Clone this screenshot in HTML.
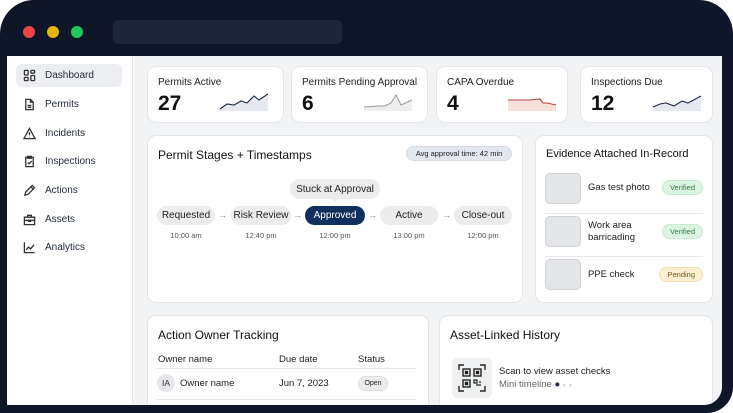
<!DOCTYPE html>
<html><head><style>
*{box-sizing:border-box;margin:0;padding:0}
body{width:733px;height:413px;background:#fff;font-family:"Liberation Sans",sans-serif;overflow:hidden;position:relative;color:#111}
.frame{position:absolute;left:0;top:0;width:733px;height:413px;background:#0f1628;border-radius:34px 34px 26px 0}
.dot{position:absolute;top:26px;width:12px;height:12px;border-radius:50%}
.url{position:absolute;left:113px;top:20px;width:229px;height:24px;background:#1d2537;border-radius:5px}
.screen{position:absolute;left:7px;top:56px;width:715px;height:349px;background:#f2f3f5;border-radius:0 0 18px 0;overflow:hidden}
.side{position:absolute;left:0;top:0;width:126px;height:349px;background:#fff;border-right:1px solid #e5e7eb}
.nav{position:absolute;left:9px;width:106px;height:23px;border-radius:6px;font-size:10px;display:flex;align-items:center;padding-left:7px;color:#1f2937}
.nav svg{width:13px;height:13px;margin-right:9px;fill:none;stroke:#333;stroke-width:1.4}
.card{position:absolute;background:#fff;border:1px solid #e3e5e8;border-radius:9px}
.kt{position:absolute;left:10px;top:10px;font-size:10px;color:#222}
.kv{position:absolute;left:10px;top:25px;font-size:21px;font-weight:bold;color:#111}
.spark{position:absolute;right:14px;top:24px;width:50px;height:20px}
h3{position:absolute;font-size:12px;font-weight:normal;color:#111;left:10px;top:12px}
.pill{position:absolute;height:19px;border-radius:10px;background:#ececec;font-size:10px;display:flex;align-items:center;justify-content:center;color:#222}
.tm{position:absolute;font-size:7.5px;color:#555;width:60px;text-align:center}
.ar{position:absolute;font-size:9px;color:#888}
.thumb{position:absolute;left:9px;width:36px;height:31px;background:#e4e5e7;border:1px solid #cfd1d4;border-radius:5px}
.el{position:absolute;left:52px;font-size:9.5px;color:#222;line-height:12px}
.badge{position:absolute;right:9px;height:15px;border-radius:8px;font-size:7.5px;display:flex;align-items:center;padding:0 7px}
.ok{background:#dcf5e2;color:#3a7a4b;border:1px solid #c5ebd0}
.pe{background:#fcefd2;color:#7a5a20;border:1px solid #f3dfb0}
.hr{position:absolute;left:9px;right:9px;height:1px;background:#e5e7eb}
.th{position:absolute;font-size:9.5px;color:#222}
</style></head><body>
<div class="frame"></div>
<div class="dot" style="left:23px;background:#ef4444"></div>
<div class="dot" style="left:47px;background:#eab308"></div>
<div class="dot" style="left:71px;background:#22c55e"></div>
<div class="url"></div>
<div class="screen">
<div class="side">
<div class="nav" style="top:8px;background:#eceef1"><svg viewBox="0 0 14 14"><rect x="1.5" y="1.5" width="4" height="5" rx=".8"/><rect x="8.5" y="1.5" width="4" height="3" rx=".8"/><rect x="1.5" y="9" width="4" height="3.5" rx=".8"/><rect x="8.5" y="7" width="4" height="5.5" rx=".8"/></svg>Dashboard</div>
<div class="nav" style="top:37px"><svg viewBox="0 0 14 14"><path d="M3 1.5h5l3 3v8H3z M8 1.5v3h3 M5 8h4 M5 10h4"/></svg>Permits</div>
<div class="nav" style="top:66px"><svg viewBox="0 0 14 14"><path d="M7 1.5L13 12.5H1z M7 5.5v3.5 M7 10.5v.5"/></svg>Incidents</div>
<div class="nav" style="top:94px"><svg viewBox="0 0 14 14"><path d="M3 2.5h8v10H3z M5 1.5h4v2H5z M5 8l1.5 1.5L9.5 6.5"/></svg>Inspections</div>
<div class="nav" style="top:123px"><svg viewBox="0 0 14 14"><path d="M2 12l1-3.5 7-7 2.5 2.5-7 7z M8.5 3l2.5 2.5"/></svg>Actions</div>
<div class="nav" style="top:152px"><svg viewBox="0 0 14 14"><path d="M1.5 4.5h11v8h-11z M5 4.5v-2h4v2 M1.5 8h11 M6 7v2h2V7"/></svg>Assets</div>
<div class="nav" style="top:180px"><svg viewBox="0 0 14 14"><path d="M1.5 1.5v11h11 M3.5 9.5l2.5-3 2 2 4-4.5"/></svg>Analytics</div>
</div>

<div class="card" style="left:140px;top:10px;width:137px;height:57px"><div class="kt">Permits Active</div><div class="kv">27</div>
<svg class="spark" viewBox="0 0 50 20"><path d="M1 18 L8 13 L15 14 L22 10 L28 12 L35 5 L40 9 L49 3 V20 H1z" fill="#e6eaf0"/><path d="M1 18 L8 13 L15 14 L22 10 L28 12 L35 5 L40 9 L49 3" fill="none" stroke="#1e2a44" stroke-width="1.1"/></svg></div>
<div class="card" style="left:284px;top:10px;width:137px;height:57px"><div class="kt">Permits Pending Approval</div><div class="kv">6</div>
<svg class="spark" viewBox="0 0 50 20"><path d="M1 16 L15 15 L22 15 L28 12 L33 4 L38 14 L49 9 V20 H1z" fill="#eeeeee"/><path d="M1 16 L15 15 L22 15 L28 12 L33 4 L38 14 L49 9" fill="none" stroke="#999" stroke-width="1"/></svg></div>
<div class="card" style="left:429px;top:10px;width:132px;height:57px"><div class="kt">CAPA Overdue</div><div class="kv">4</div>
<svg class="spark" viewBox="0 0 50 20" style="width:50px;right:10px"><path d="M1 9 L22 9 L33 8 L36 12 L40 12 L49 14 V20 H1z" fill="#f8e0dc"/><path d="M1 9 L22 9 L33 8 L36 12 L40 12 L49 14" fill="none" stroke="#b5463a" stroke-width="1.1"/></svg></div>
<div class="card" style="left:573px;top:10px;width:133px;height:57px"><div class="kt">Inspections Due</div><div class="kv">12</div>
<svg class="spark" viewBox="0 0 50 20" style="right:10px"><path d="M1 16 L8 13 L14 12 L22 15 L30 10 L36 12 L49 5 V20 H1z" fill="#e6eaf0"/><path d="M1 16 L8 13 L14 12 L22 15 L30 10 L36 12 L49 5" fill="none" stroke="#1e2a44" stroke-width="1.1"/></svg></div>

<div class="card" style="left:140px;top:79px;width:376px;height:168px">
<h3>Permit Stages + Timestamps</h3>
<div class="pill" style="left:258px;top:10px;width:106px;height:15px;font-size:7.5px;background:#e3e7ee;border:1px solid #d5dae3">Avg approval time: 42 min</div>
<div class="pill" style="left:142px;top:43px;width:90px;height:20px">Stuck at Approval</div>
<div style="position:absolute;left:183px;top:62px;border:4px solid transparent;border-top-color:#ececec"></div>
<div class="pill" style="left:9px;top:70px;width:58px">Requested</div>
<div class="pill" style="left:83px;top:70px;width:60px">Risk Review</div>
<div class="pill" style="left:157px;top:70px;width:60px;background:#0f2f5c;color:#fff">Approved</div>
<div class="pill" style="left:232px;top:70px;width:58px">Active</div>
<div class="pill" style="left:306px;top:70px;width:58px">Close-out</div>
<div class="ar" style="left:70px;top:74px">→</div><div class="ar" style="left:145px;top:74px">→</div><div class="ar" style="left:220px;top:74px">→</div><div class="ar" style="left:294px;top:74px">→</div>
<div class="tm" style="left:8px;top:95px">10:00 am</div><div class="tm" style="left:83px;top:95px">12:40 pm</div><div class="tm" style="left:157px;top:95px">12:00 pm</div><div class="tm" style="left:231px;top:95px">13:00 pm</div><div class="tm" style="left:305px;top:95px">12:00 pm</div>
</div>

<div class="card" style="left:528px;top:79px;width:178px;height:168px">
<h3 style="font-size:11px">Evidence Attached In-Record</h3>
<div class="thumb" style="top:37px"></div><div class="el" style="top:46px">Gas test photo</div><div class="badge ok" style="top:44px">Verified</div>
<div class="hr" style="top:77px"></div>
<div class="thumb" style="top:80px"></div><div class="el" style="top:84px">Work area<br>barricading</div><div class="badge ok" style="top:88px">Verified</div>
<div class="hr" style="top:120px"></div>
<div class="thumb" style="top:123px"></div><div class="el" style="top:133px">PPE check</div><div class="badge pe" style="top:131px">Pending</div>
</div>

<div class="card" style="left:140px;top:259px;width:282px;height:110px">
<h3>Action Owner Tracking</h3>
<div class="th" style="left:10px;top:38px">Owner name</div><div class="th" style="left:131px;top:38px">Due date</div><div class="th" style="left:210px;top:38px">Status</div>
<div class="hr" style="top:52px;right:12px"></div>
<div style="position:absolute;left:9px;top:58px;width:18px;height:18px;border-radius:50%;background:#e5e7eb;font-size:8.5px;display:flex;align-items:center;justify-content:center;color:#333">IA</div>
<div class="th" style="left:32px;top:62px">Owner name</div><div class="th" style="left:131px;top:62px">Jun 7, 2023</div>
<div class="pill" style="left:210px;top:60px;width:30px;height:15px;font-size:7px;border:1px solid #ddd">Open</div>
<div class="hr" style="top:83px;right:12px"></div>
</div>

<div class="card" style="left:432px;top:259px;width:274px;height:110px">
<h3>Asset-Linked History</h3>
<div style="position:absolute;left:12px;top:42px;width:40px;height:40px;background:#eef0f2;border-radius:5px">
<svg viewBox="0 0 40 40" width="40" height="40" fill="none" stroke="#222" stroke-width="1.4"><path d="M7 12V7h5 M28 7h5v5 M7 28v5h5 M33 28v5h-5"/><rect x="11" y="11" width="7" height="7"/><rect x="22" y="11" width="7" height="7"/><rect x="11" y="22" width="7" height="7"/><rect x="13.5" y="13.5" width="2" height="2" fill="#222"/><rect x="24.5" y="13.5" width="2" height="2" fill="#222"/><rect x="13.5" y="24.5" width="2" height="2" fill="#222"/><path d="M22 22h3v3h-3z M27 24h2 M24 27h5" stroke-width="1.2"/></svg></div>
<div class="th" style="left:59px;top:50px">Scan to view asset checks</div>
<div class="th" style="left:59px;top:63px;color:#666">Mini timeline <span style="color:#1e2a44">●</span><span style="color:#ddd;font-size:7px"> ● ●</span></div>
</div>
</div>
</body></html>
